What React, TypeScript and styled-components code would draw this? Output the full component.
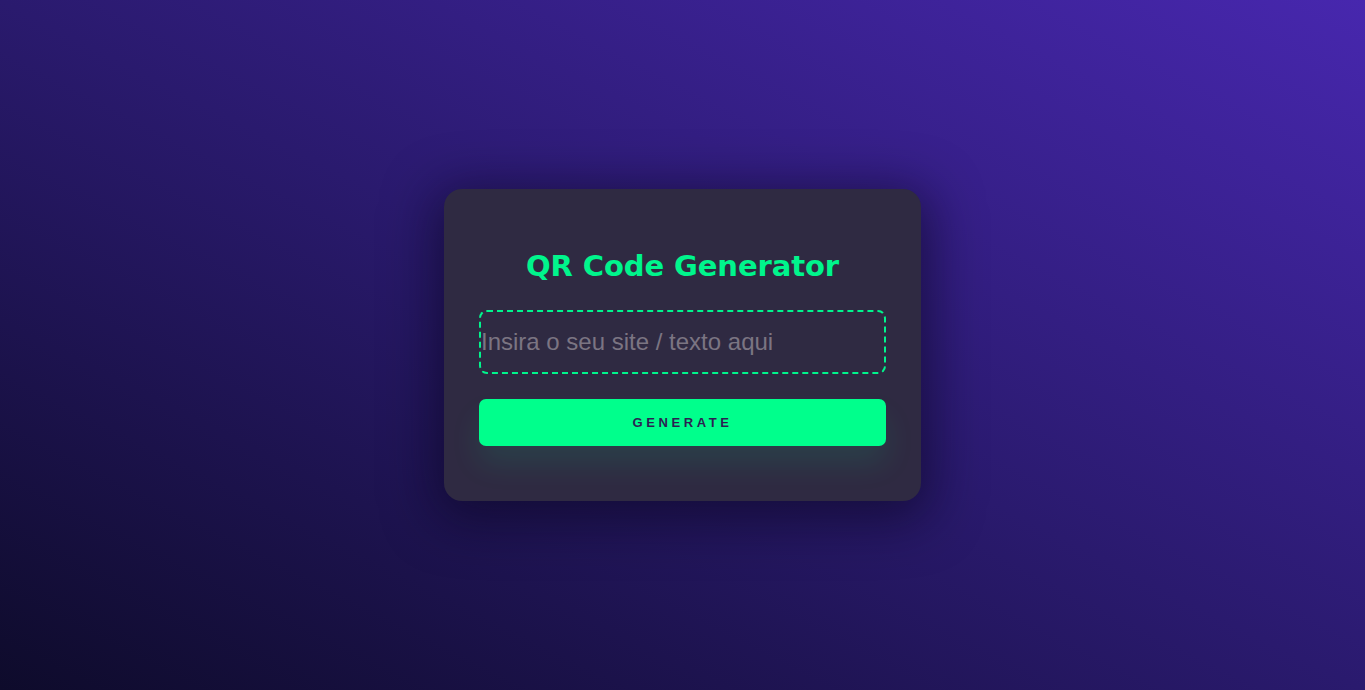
import React from "react";
import styled, { createGlobalStyle } from "styled-components";

const Global = createGlobalStyle`
  html, body { margin: 0; padding: 0; }
  body { font-family: "Liberation Sans", Arial, sans-serif; }
`;

const Page = styled.main`
  width: 100vw;
  height: 100vh;
  display: flex;
  align-items: center;
  justify-content: center;
  background: linear-gradient(to top right, #0e0b2b 0%, #2a1a6e 50%, #4727ae 100%);
  overflow: hidden;
`;

const Card = styled.section`
  width: 477px;
  box-sizing: border-box;
  padding: 57px 35px 55px;
  background: #2f2a42;
  border-radius: 18px;
  box-shadow: 0 10px 50px 10px rgba(10, 6, 30, 0.55);
  display: flex;
  flex-direction: column;
`;

const Title = styled.h1`
  margin: 0 0 24px;
  text-align: center;
  font-family: "DejaVu Sans", "Open Sans", sans-serif;
  font-weight: 700;
  font-size: 29px;
  line-height: 40px;
  color: #00f58c;
  letter-spacing: -0.1px;
`;

const Input = styled.input`
  box-sizing: border-box;
  width: 100%;
  height: 64px;
  padding: 0;
  border: 2px dashed #00f58c;
  border-radius: 8px;
  background: transparent;
  outline: none;
  font-family: "Liberation Sans", Arial, sans-serif;
  font-size: 24px;
  color: #ddd;
  &::placeholder { color: #7b7582; }
`;

const Button = styled.button`
  margin-top: 25px;
  height: 47px;
  border: none;
  border-radius: 7px;
  background: #00ff8c;
  color: #2c1f52;
  font-family: "Liberation Sans", Arial, sans-serif;
  font-weight: 700;
  font-size: 13px;
  letter-spacing: 3.6px;
  cursor: pointer;
  box-shadow: 0 18px 30px rgba(0, 255, 140, 0.1);
`;

export default function App() {
  return (
    <>
      <Global />
      <Page>
        <Card>
          <Title>QR Code Generator</Title>
          <Input placeholder="Insira o seu site / texto aqui" />
          <Button>GENERATE</Button>
        </Card>
      </Page>
    </>
  );
}
